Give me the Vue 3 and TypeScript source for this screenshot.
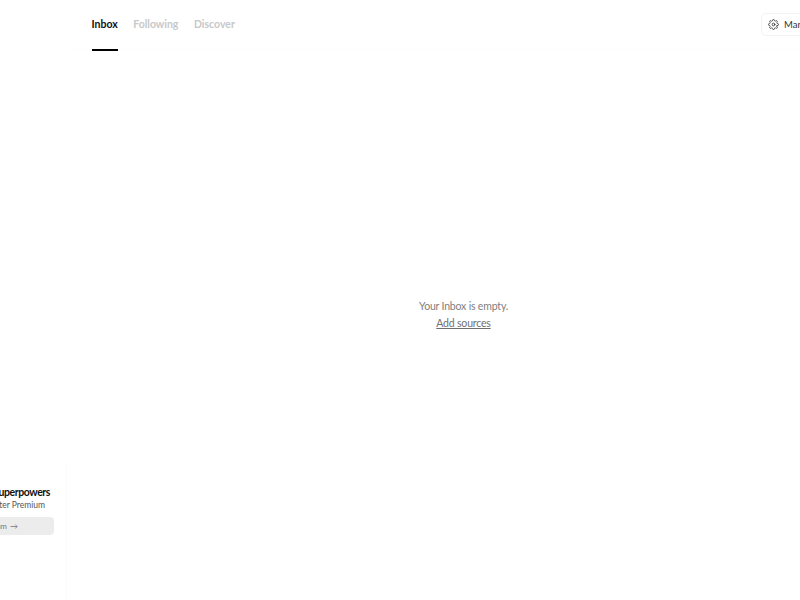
<script setup lang="ts">
const tabs = [
  { label: 'Inbox', active: true },
  { label: 'Following', active: false },
  { label: 'Discover', active: false },
]
</script>

<template>
  <div class="page">
    <aside class="sidebar">
      <div class="promo">
        <div class="promo-title">Unlock your superpowers</div>
        <div class="promo-sub">Get Letter Premium</div>
        <button class="promo-btn">Go Premium <span class="arrow">→</span></button>
      </div>
    </aside>
    <main class="main">
      <header class="topbar">
        <nav class="tabs">
          <a v-for="t in tabs" :key="t.label" class="tab" :class="{ active: t.active }">{{ t.label }}</a>
        </nav>
        <button class="manage">
          <svg width="11" height="11" viewBox="0 0 24 24" fill="none" stroke="#333" stroke-width="1.8" stroke-linecap="round" stroke-linejoin="round">
            <circle cx="12" cy="12" r="3" />
            <path d="M19.4 15a1.65 1.65 0 0 0 .33 1.82l.06.06a2 2 0 1 1-2.83 2.83l-.06-.06a1.65 1.65 0 0 0-1.82-.33 1.65 1.65 0 0 0-1 1.51V21a2 2 0 1 1-4 0v-.09A1.65 1.65 0 0 0 9 19.4a1.65 1.65 0 0 0-1.82.33l-.06.06a2 2 0 1 1-2.83-2.83l.06-.06a1.65 1.65 0 0 0 .33-1.82 1.65 1.65 0 0 0-1.51-1H3a2 2 0 1 1 0-4h.09A1.65 1.65 0 0 0 4.6 9a1.65 1.65 0 0 0-.33-1.82l-.06-.06a2 2 0 1 1 2.83-2.83l.06.06a1.65 1.65 0 0 0 1.82.33H9a1.65 1.65 0 0 0 1-1.51V3a2 2 0 1 1 4 0v.09a1.65 1.65 0 0 0 1 1.51 1.65 1.65 0 0 0 1.82-.33l.06-.06a2 2 0 1 1 2.83 2.83l-.06.06a1.65 1.65 0 0 0-.33 1.82V9a1.65 1.65 0 0 0 1.51 1H21a2 2 0 1 1 0 4h-.09a1.65 1.65 0 0 0-1.51 1z" />
          </svg>
          <span>Manage</span>
        </button>
      </header>
      <section class="empty">
        <p class="empty-text">Your Inbox is empty.</p>
        <a class="empty-link">Add sources</a>
      </section>
    </main>
  </div>
</template>

<style>
html, body { margin: 0; overflow: hidden; background: #fff; }
</style>

<style scoped>
.page {
  display: flex;
  width: 993px;
  height: 600px;
  margin-left: -133px;
  overflow: hidden;
  font-family: Lato, "Noto Sans", sans-serif;
  background: #fff;
}
.sidebar {
  flex: 0 0 200px;
  height: 600px;
  display: flex;
  flex-direction: column;
  justify-content: flex-end;
  box-sizing: border-box;
}
.promo {
  box-sizing: border-box;
  height: 138px;
  padding: 24px 12px 0;
  display: flex;
  flex-direction: column;
  align-items: stretch;
  border-right: 1px solid #fbfbfb;
}
.promo-title {
  font-size: 10.5px;
  line-height: 13px;
  font-weight: 700;
  letter-spacing: -0.42px;
  color: #111;
  white-space: nowrap;
  text-align: right;
  padding-right: 4px;
}
.promo-sub {
  font-size: 8.5px;
  line-height: 13px;
  color: #555;
  white-space: nowrap;
  text-align: right;
  padding-right: 9px;
}
.promo-btn {
  margin-top: 5px;
  height: 18px;
  border: none;
  border-radius: 4px;
  background: #ececec;
  color: #777;
  font: inherit;
  font-size: 8px;
  padding: 0 36px 0 0;
  text-align: right;
}
.arrow { margin-left: 1px; font-size: 8px; }
.main {
  flex: 1;
  display: flex;
  flex-direction: column;
  min-width: 0;
}
.topbar {
  display: flex;
  align-items: center;
  justify-content: space-between;
  box-sizing: border-box;
  height: 50px;
  padding: 0 24px 0 24.5px;
  flex: none;
  border-bottom: 1px solid #fdfdfd;
}
.tabs { display: flex; gap: 15.5px; height: 50px; }
.tab {
  display: flex;
  align-items: center;
  box-sizing: border-box;
  height: 51px;
  font-size: 10.5px;
  font-weight: 700;
  color: #c8c8c8;
  border-bottom: 2px solid transparent;
}
.tab.active { color: #111; border-bottom-color: #000; }
.manage {
  display: flex;
  align-items: center;
  gap: 5px;
  width: 75px;
  flex: none;
  height: 23px;
  padding: 0 0 0 6px;
  border: 1px solid #f3f3f3;
  border-radius: 5px;
  background: #fff;
  font: inherit;
  font-size: 9.5px;
  color: #333;
  white-space: nowrap;
}
.empty {
  flex: 1;
  display: flex;
  flex-direction: column;
  align-items: center;
  padding-top: 248px;
  color: #808080;
  font-size: 10.5px;
  letter-spacing: -0.18px;
}
.empty-text { margin: 0; line-height: 17px; }
.empty-link { line-height: 17px; text-decoration: underline; color: #707070; }
</style>
